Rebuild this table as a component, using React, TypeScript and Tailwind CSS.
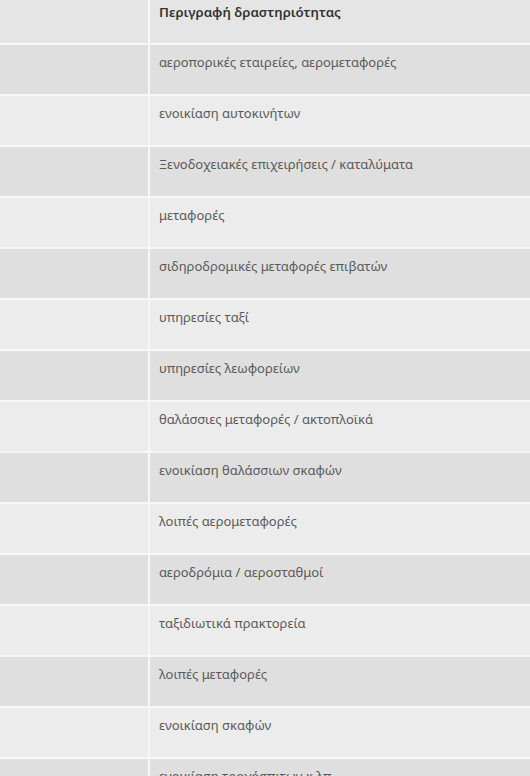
import React from "react";

const rows = [
  "αεροπορικές εταιρείες, αερομεταφορές",
  "ενοικίαση αυτοκινήτων",
  "Ξενοδοχειακές επιχειρήσεις / καταλύματα",
  "μεταφορές",
  "σιδηροδρομικές μεταφορές επιβατών",
  "υπηρεσίες ταξί",
  "υπηρεσίες λεωφορείων",
  "θαλάσσιες μεταφορές / ακτοπλοϊκά",
  "ενοικίαση θαλάσσιων σκαφών",
  "λοιπές αερομεταφορές",
  "αεροδρόμια / αεροσταθμοί",
  "ταξιδιωτικά πρακτορεία",
  "λοιπές μεταφορές",
  "ενοικίαση σκαφών",
  "ενοικίαση τροχόσπιτων κ.λπ.",
];

export default function App() {
  return (
    <div
      className="w-[530px] h-[776px] overflow-hidden bg-[#f3f3f3]"
      style={{ fontFamily: '"Noto Sans", "Open Sans", sans-serif' }}
    >
      <div className="flex h-[45px] bg-[#e5e5e5] border-b-2 border-[#f7f7f7]">
        <div className="w-[150px] border-r-2 border-[#f7f7f7] shrink-0" />
        <div className="pl-[9px] pt-[3px] text-[13.3px] leading-[18px] font-semibold text-[#333]">
          Περιγραφή δραστηριότητας
        </div>
      </div>
      {rows.map((r, i) => (
        <div
          key={i}
          className={
            "flex h-[51px] border-b-2 border-[#f7f7f7] " +
            (i % 2 === 0 ? "bg-[#dfdfdf]" : "bg-[#ececec]")
          }
        >
          <div className="w-[150px] border-r-2 border-[#f7f7f7] shrink-0" />
          <div className="pl-[9px] pt-[8px] text-[13px] leading-[18px] text-[#5a5a5a]">
            {r}
          </div>
        </div>
      ))}
    </div>
  );
}
